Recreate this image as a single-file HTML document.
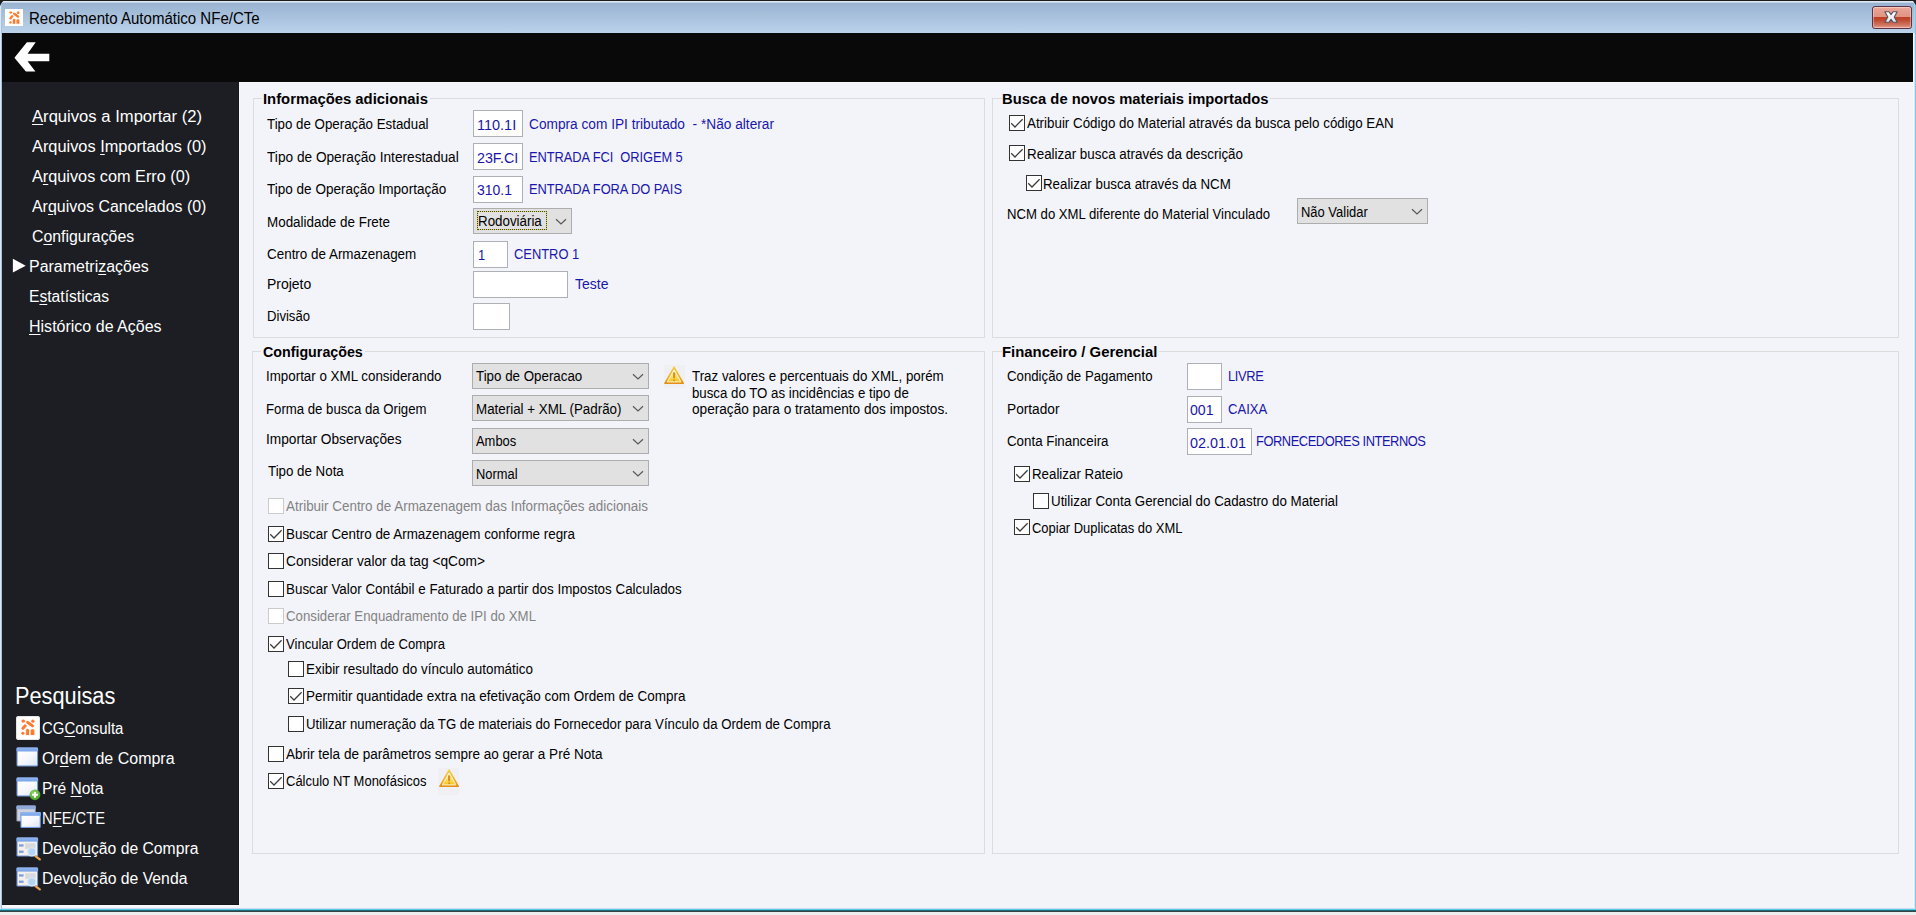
<!DOCTYPE html>
<html lang="pt-BR">
<head>
<meta charset="utf-8">
<title>Recebimento Automático NFe/CTe</title>
<style>
html,body{margin:0;padding:0;}
body{width:1916px;height:915px;overflow:hidden;position:relative;background:#f3f4f9;font-family:"Liberation Sans",sans-serif;}
div,span,svg{position:absolute;box-sizing:border-box;}
.t{white-space:pre;transform-origin:0 0;font-family:"Liberation Sans",sans-serif;}
.t u{text-decoration:underline;text-decoration-thickness:1px;text-underline-offset:2px;}
.inp{background:#fff;border:1px solid #adb0b5;}
.cmb{background:#e1e1e1;border:1px solid #adadad;}
.cmb .chev{right:4px;top:9px;}
.grp{border:1px solid #dcdcdc;}
.gap{background:#f3f4f9;}
.cb{width:16px;height:16px;background:#fff;border:1px solid #333;}
.cb svg{left:-1px;top:-1px;}
.cb.dis{border-color:#cbcbcb;background:#fff;}
</style>
</head>
<body>
<!-- window frame -->
<div style="left:0;top:0;width:1916px;height:33px;background:linear-gradient(#99b3d1 3px,#bad1ea 32px)"></div>
<div style="left:0;top:0;width:1916px;height:1px;background:#1b1b1b"></div>
<div style="left:0;top:1px;width:1916px;height:1px;background:#dfe8f2"></div>
<div style="left:0;top:2px;width:1916px;height:1px;background:#c4d4e7"></div>
<div style="left:0;top:3px;width:1px;height:906px;background:#dbe7f5"></div>
<div style="left:1px;top:3px;width:1px;height:906px;background:#a9c1de"></div>
<div style="left:1913px;top:33px;width:1px;height:876px;background:#f8f9fd"></div>
<div style="left:1914px;top:33px;width:1px;height:876px;background:#dce2f4"></div>
<div style="left:1914px;top:3px;width:1px;height:30px;background:#b4cbe4"></div>
<div style="left:1915px;top:3px;width:1px;height:906px;background:#7ccbe9"></div>
<svg style="left:0;top:0" width="8" height="8" viewBox="0 0 8 8"><path d="M0 0H8V1H3.4L2.3 2L1.5 3L1 4L0.5 5L0 6.2Z" fill="#1c1c1c"/></svg>
<svg style="left:1908px;top:0" width="8" height="8" viewBox="0 0 8 8"><path d="M8 0V5.6L7.2 4L6.5 3L5.8 2L5 1H0V0Z" fill="#1c1c1c"/></svg>
<!-- title icon -->
<div style="left:5px;top:9px;width:18px;height:17px;background:#fff"></div>

<!-- close button -->
<div style="left:1872px;top:6px;width:40px;height:23px;border-radius:3.5px;background:#5a3346"></div>
<div style="left:1873px;top:7px;width:38px;height:21px;border-radius:2.5px;background:linear-gradient(#f4c2b6 0,#e8a293 8%,#e09484 46%,#bf3f24 50%,#c04a30 62%,#d27a66 88%,#e8a99c 100%)"></div>
<div style="left:1873px;top:7px;width:38px;height:21px;border-radius:2.5px;box-shadow:inset 0 0 0 1px rgba(255,220,210,.45)"></div>
<svg style="left:1884px;top:10px" width="15" height="14" viewBox="0 0 15 14">
 <defs><linearGradient id="xg" x1="0" y1="0" x2="0" y2="1"><stop offset="0" stop-color="#ffffff"/><stop offset="1" stop-color="#e2e2e6"/></linearGradient></defs>
 <path d="M0.9 1.7 L5.0 1.7 L7.05 4.6 L9.1 1.7 L13.2 1.7 L10.3 7.0 L13.2 12.2 L9.1 12.2 L7.05 9.4 L5.0 12.2 L0.9 12.2 L3.8 7.0 Z" fill="url(#xg)" stroke="#55505f" stroke-width="1.1" stroke-linejoin="round"/>
</svg>
<!-- black bar -->
<div style="left:2px;top:33px;width:1911px;height:49px;background:#090909"></div>
<svg style="left:0;top:33px" width="80" height="49" viewBox="0 33 80 49">
 <polygon points="14.4,57.8 26.9,42.3 35.7,42.3 27.6,53.7 49.3,53.7 49.3,61.3 27.6,61.3 35.4,71.4 25.9,71.4" fill="#fff"/>
</svg>
<!-- sidebar -->
<div style="left:2px;top:82px;width:237px;height:823px;background:#1c1e23"></div>
<svg style="left:12px;top:258px" width="15" height="16" viewBox="0 0 15 16"><polygon points="0.9,0.8 13.7,7.7 0.9,14.6" fill="#fff"/></svg>
<!-- bottom -->
<div style="left:2px;top:905px;width:238px;height:2px;background:#f9faff"></div>
<div style="left:239px;top:82px;width:1px;height:824px;background:#f8f9fd"></div>
<div style="left:238px;top:82px;width:1px;height:823px;background:#15171b"></div>
<div style="left:2px;top:904px;width:237px;height:1px;background:#15171b"></div>
<div style="left:240px;top:82px;width:1673px;height:1px;background:#f8f9fd"></div>
<div style="left:2px;top:908px;width:1912px;height:1px;background:#d2d9ee"></div>
<div style="left:0;top:909px;width:1916px;height:1px;background:#4fd0e8"></div>
<div style="left:0;top:910px;width:1916px;height:1px;background:#1a6878"></div>
<div style="left:0;top:911px;width:1916px;height:1px;background:#3a4244"></div>
<div style="left:0;top:912px;width:1916px;height:3px;background:#eeeeee"></div>
<div class="inp" style="left:473px;top:110px;width:50px;height:27px"></div>
<div class="inp" style="left:473px;top:143px;width:50px;height:27px"></div>
<div class="inp" style="left:473px;top:175.5px;width:50px;height:27px"></div>
<div class="inp" style="left:473px;top:240.5px;width:35px;height:27px"></div>
<div class="inp" style="left:473px;top:270.5px;width:95px;height:27px"></div>
<div class="inp" style="left:473px;top:303px;width:37px;height:27px"></div>
<div class="inp" style="left:1187px;top:363px;width:35px;height:27px"></div>
<div class="inp" style="left:1187px;top:395.5px;width:35px;height:27px"></div>
<div class="inp" style="left:1187px;top:428px;width:65px;height:27px"></div>
<div class="cmb" style="left:473px;top:208px;width:99px;height:26px"><svg class="chev" width="12" height="8" viewBox="0 0 12 8"><polyline points="1,1.2 6,6 11,1.2" fill="none" stroke="#585858" stroke-width="1.2"/></svg></div>
<div class="cmb" style="left:472px;top:363px;width:177px;height:26px"><svg class="chev" width="12" height="8" viewBox="0 0 12 8"><polyline points="1,1.2 6,6 11,1.2" fill="none" stroke="#585858" stroke-width="1.2"/></svg></div>
<div class="cmb" style="left:472px;top:395px;width:177px;height:26px"><svg class="chev" width="12" height="8" viewBox="0 0 12 8"><polyline points="1,1.2 6,6 11,1.2" fill="none" stroke="#585858" stroke-width="1.2"/></svg></div>
<div class="cmb" style="left:472px;top:428px;width:177px;height:26px"><svg class="chev" width="12" height="8" viewBox="0 0 12 8"><polyline points="1,1.2 6,6 11,1.2" fill="none" stroke="#585858" stroke-width="1.2"/></svg></div>
<div class="cmb" style="left:472px;top:460px;width:177px;height:26px"><svg class="chev" width="12" height="8" viewBox="0 0 12 8"><polyline points="1,1.2 6,6 11,1.2" fill="none" stroke="#585858" stroke-width="1.2"/></svg></div>
<div class="cmb" style="left:1297px;top:198px;width:131px;height:26px"><svg class="chev" width="12" height="8" viewBox="0 0 12 8"><polyline points="1,1.2 6,6 11,1.2" fill="none" stroke="#585858" stroke-width="1.2"/></svg></div>
<div class="grp" style="left:253px;top:98px;width:732px;height:240px"></div>
<div class="gap" style="left:262px;top:97px;width:167.5px;height:3px"></div>
<div class="grp" style="left:992px;top:98px;width:907px;height:240px"></div>
<div class="gap" style="left:1001.5px;top:97px;width:268.5px;height:3px"></div>
<div class="grp" style="left:252px;top:350.5px;width:733px;height:503.5px"></div>
<div class="gap" style="left:261px;top:349.5px;width:103.75px;height:3px"></div>
<div class="grp" style="left:992px;top:350.5px;width:907px;height:503.5px"></div>
<div class="gap" style="left:1001.5px;top:349.5px;width:157.5px;height:3px"></div>
<!-- icons -->
<svg width="0" height="0" style="left:0;top:0">
 <defs>
  <linearGradient id="wb" x1="0" y1="0" x2="1" y2="1"><stop offset="0" stop-color="#ffffff"/><stop offset="0.5" stop-color="#f6f8fd"/><stop offset="1" stop-color="#dde5f6"/></linearGradient>
  <linearGradient id="wt" x1="0" y1="0" x2="0" y2="1"><stop offset="0" stop-color="#93b6ef"/><stop offset="1" stop-color="#77a3e8"/></linearGradient>
  <radialGradient id="gr" cx="0.4" cy="0.35" r="0.7"><stop offset="0" stop-color="#9bd86a"/><stop offset="1" stop-color="#3f9a22"/></radialGradient>
  <linearGradient id="wy" x1="0" y1="0" x2="0" y2="1"><stop offset="0" stop-color="#fff6c4"/><stop offset="0.55" stop-color="#fbe066"/><stop offset="1" stop-color="#f2c318"/></linearGradient>
  <linearGradient id="wo" x1="0" y1="0" x2="0" y2="1"><stop offset="0" stop-color="#f7cc4a"/><stop offset="0.6" stop-color="#f0b02c"/><stop offset="1" stop-color="#e58f17"/></linearGradient>
  <g id="logo" fill="#ff6f1e" stroke="#ff6f1e" opacity="0.93" stroke-linecap="round">
   <ellipse cx="1.6" cy="1.35" rx="1.3" ry="1.05" stroke-width="0.3"/>
   <ellipse cx="9.1" cy="1.5" rx="1.1" ry="1.2" stroke-width="0.3"/>
   <path d="M5.0 2.4 L8.9 5.3" stroke-width="2.3" fill="none"/>
   <path d="M1.35 7.2 L3.1 5.1" stroke-width="2.3" fill="none"/>
   <ellipse cx="1.3" cy="11.25" rx="1.05" ry="1.1" stroke-width="0.3"/>
   <path d="M3.8 8.6 C4.2 7.4 5.7 7.4 6.1 8.3 L6.1 12.5 L3.9 12.5 Z" stroke-width="0.2"/>
   <path d="M7.5 8.9 C7.9 7.6 9.9 7.6 10.2 8.9 L10.2 12.5 L7.6 12.5 Z" stroke-width="0.2"/>
  </g>
  <g id="win">
   <rect x="0.5" y="0.5" width="21.6" height="19" rx="1.4" fill="#7399dc"/>
   <rect x="0.5" y="0.5" width="21.6" height="4.4" rx="1.4" fill="url(#wt)"/>
   <rect x="1.6" y="4.5" width="19.4" height="13.9" fill="url(#wb)"/>
  </g>
 </defs>
</svg>
<!-- CGConsulta -->
<div style="left:16px;top:716px;width:24px;height:24px;background:#fff;border-radius:3px;box-shadow:inset 0 0 0 1px #e4e4e4"></div>
<svg style="left:16px;top:716px" width="24" height="24" viewBox="0 0 24 24"><use href="#logo" transform="translate(5.2,3.4) scale(1.28,1.24)"/></svg>
<!-- Ordem de Compra -->
<svg style="left:15.5px;top:747px" width="24" height="21" viewBox="0 0 24 21"><use href="#win"/></svg>
<!-- Pre Nota -->
<svg style="left:15.5px;top:777px" width="26" height="25" viewBox="0 0 26 25"><use href="#win"/>
 <circle cx="19" cy="17.8" r="5.4" fill="url(#gr)"/><path d="M19 14.9v5.8M16.1 17.8h5.8" stroke="#fff" stroke-width="1.9"/></svg>
<!-- NFE/CTE -->
<svg style="left:15.5px;top:805.4px" width="26" height="24" viewBox="0 0 26 24">
 <rect x="0.4" y="0.6" width="19.4" height="16" rx="1.3" fill="#8797b8"/>
 <rect x="0.4" y="0.6" width="19.4" height="3.8" rx="1.3" fill="#8eaad9"/>
 <rect x="1.4" y="4.2" width="17.4" height="11.4" fill="#cfd2da"/>
 <rect x="4.4" y="7" width="20.4" height="16" rx="1.3" fill="#7399dc"/>
 <rect x="4.4" y="7" width="20.4" height="4.2" rx="1.3" fill="url(#wt)"/>
 <rect x="5.5" y="10.8" width="18.2" height="11.1" fill="url(#wb)"/>
</svg>
<!-- Devolucao de Compra / Venda -->
<svg style="left:15.5px;top:837px" width="27" height="25" viewBox="0 0 27 25" id="dev1">
 <rect x="0.5" y="0.4" width="21.6" height="19.2" rx="1.4" fill="#7399dc"/>
 <rect x="0.5" y="0.4" width="21.6" height="4.4" rx="1.4" fill="url(#wt)"/>
 <rect x="1.6" y="4.6" width="19.4" height="13.9" fill="#f4f1ec"/>
 <rect x="3" y="7.3" width="4.6" height="2.3" fill="#7d9fe2"/>
 <rect x="3" y="13.6" width="4.6" height="2.3" fill="#7d9fe2"/>
 <rect x="9.2" y="6.3" width="10.4" height="5.6" fill="#d9d9dc"/>
 <path d="M19.7 19.4 L23.8 22.4" stroke="#e9a352" stroke-width="2.3" stroke-linecap="round"/>
 <circle cx="15.8" cy="14.85" r="4.1" fill="#b4d4f6" stroke="#dbeafb" stroke-width="1.1"/>
</svg>
<svg style="left:15.5px;top:867px" width="27" height="25" viewBox="0 0 27 25"><use href="#dev1"/></svg>
<!-- warning icons -->
<div style="left:664px;top:365px;width:21px;height:23px;background:#f0f0f2"></div>
<svg style="left:663px;top:365px" width="23" height="21" viewBox="0 0 23 21" id="warn">
 <path d="M11.1 1.9 L20.4 18.4 L1.8 18.4 Z" fill="url(#wo)" stroke="url(#wo)" stroke-width="1.2" stroke-linejoin="round"/>
 <path d="M11.1 4.9 L17.9 16.9 L4.3 16.9 Z" fill="url(#wy)" stroke="#fff8dc" stroke-width="1" stroke-linejoin="round"/>
 <path d="M11.1 8.3 v4" stroke="#d79222" stroke-width="2.2" stroke-linecap="round"/>
 <circle cx="11.1" cy="15.2" r="1" fill="#d79222"/>
</svg>
<div style="left:438px;top:768px;width:21px;height:27px;background:#f0f0f2"></div>
<svg style="left:437.5px;top:768.3px" width="23" height="21" viewBox="0 0 23 21"><use href="#warn"/></svg>
<!-- focus rect -->
<div style="left:477px;top:211px;width:70px;height:19px;border:1px solid #d8d848"></div>
<div style="left:477px;top:211px;width:70px;height:19px;border:1px dotted #4a4a18"></div>
<!-- title logo -->
<svg style="left:5px;top:9px" width="18" height="17" viewBox="0 0 18 17"><use href="#logo" transform="translate(4.05,2.2)"/></svg>

<div class="cb dis" style="left:268px;top:498px"></div>
<div class="cb" style="left:268px;top:525.5px"><svg width="16" height="16" viewBox="0 0 16 16"><polyline points="2.2,8.3 6,12 13.6,4.2" fill="none" stroke="#3c3c3c" stroke-width="1.25"/></svg></div>
<div class="cb" style="left:268px;top:553px"></div>
<div class="cb" style="left:268px;top:580.5px"></div>
<div class="cb dis" style="left:268px;top:608px"></div>
<div class="cb" style="left:268px;top:635.5px"><svg width="16" height="16" viewBox="0 0 16 16"><polyline points="2.2,8.3 6,12 13.6,4.2" fill="none" stroke="#3c3c3c" stroke-width="1.25"/></svg></div>
<div class="cb" style="left:288px;top:660.5px"></div>
<div class="cb" style="left:288px;top:688px"><svg width="16" height="16" viewBox="0 0 16 16"><polyline points="2.2,8.3 6,12 13.6,4.2" fill="none" stroke="#3c3c3c" stroke-width="1.25"/></svg></div>
<div class="cb" style="left:288px;top:715.5px"></div>
<div class="cb" style="left:268px;top:745.5px"></div>
<div class="cb" style="left:268px;top:773px"><svg width="16" height="16" viewBox="0 0 16 16"><polyline points="2.2,8.3 6,12 13.6,4.2" fill="none" stroke="#3c3c3c" stroke-width="1.25"/></svg></div>
<div class="cb" style="left:1009px;top:115px"><svg width="16" height="16" viewBox="0 0 16 16"><polyline points="2.2,8.3 6,12 13.6,4.2" fill="none" stroke="#3c3c3c" stroke-width="1.25"/></svg></div>
<div class="cb" style="left:1009px;top:145.25px"><svg width="16" height="16" viewBox="0 0 16 16"><polyline points="2.2,8.3 6,12 13.6,4.2" fill="none" stroke="#3c3c3c" stroke-width="1.25"/></svg></div>
<div class="cb" style="left:1025.5px;top:175.25px"><svg width="16" height="16" viewBox="0 0 16 16"><polyline points="2.2,8.3 6,12 13.6,4.2" fill="none" stroke="#3c3c3c" stroke-width="1.25"/></svg></div>
<div class="cb" style="left:1014.25px;top:465.5px"><svg width="16" height="16" viewBox="0 0 16 16"><polyline points="2.2,8.3 6,12 13.6,4.2" fill="none" stroke="#3c3c3c" stroke-width="1.25"/></svg></div>
<div class="cb" style="left:1033px;top:493px"></div>
<div class="cb" style="left:1014.25px;top:519.25px"><svg width="16" height="16" viewBox="0 0 16 16"><polyline points="2.2,8.3 6,12 13.6,4.2" fill="none" stroke="#3c3c3c" stroke-width="1.25"/></svg></div>
<span class="t" style="left:29.30px;top:7.00px;font-size:16px;line-height:24px;color:#000;transform:scaleX(0.9399);">Recebimento Automático NFe/CTe</span>
<span class="t" style="left:31.50px;top:104.70px;font-size:15.6px;line-height:23px;color:#ffffff;transform:scaleX(1.0660);"><u>A</u>rquivos a Importar (2)</span>
<span class="t" style="left:31.50px;top:134.70px;font-size:15.6px;line-height:23px;color:#ffffff;transform:scaleX(1.0486);">Arquivos <u>I</u>mportados (0)</span>
<span class="t" style="left:31.50px;top:164.70px;font-size:15.6px;line-height:23px;color:#ffffff;transform:scaleX(1.0431);">A<u>r</u>quivos com Erro (0)</span>
<span class="t" style="left:31.50px;top:194.70px;font-size:15.6px;line-height:23px;color:#ffffff;transform:scaleX(1.0214);">Ar<u>q</u>uivos Cancelados (0)</span>
<span class="t" style="left:31.80px;top:224.70px;font-size:15.6px;line-height:23px;color:#ffffff;transform:scaleX(1.0153);">C<u>o</u>nfigurações</span>
<span class="t" style="left:28.90px;top:254.70px;font-size:15.6px;line-height:23px;color:#ffffff;transform:scaleX(1.0239);">Parametri<u>z</u>ações</span>
<span class="t" style="left:28.90px;top:284.70px;font-size:15.6px;line-height:23px;color:#ffffff;transform:scaleX(1.0033);">E<u>s</u>tatísticas</span>
<span class="t" style="left:28.90px;top:314.70px;font-size:15.6px;line-height:23px;color:#ffffff;transform:scaleX(1.0267);"><u>H</u>istórico de Ações</span>
<span class="t" style="left:14.50px;top:678.80px;font-size:23px;line-height:34px;color:#ffffff;transform:scaleX(0.9451);">Pesquisas</span>
<span class="t" style="left:42.10px;top:717.00px;font-size:15.6px;line-height:23px;color:#ffffff;transform:scaleX(0.9584);">CG<u>C</u>onsulta</span>
<span class="t" style="left:42.10px;top:747.00px;font-size:15.6px;line-height:23px;color:#ffffff;transform:scaleX(1.0268);">Or<u>d</u>em de Compra</span>
<span class="t" style="left:42.10px;top:777.00px;font-size:15.6px;line-height:23px;color:#ffffff;transform:scaleX(0.9976);">Pré <u>N</u>ota</span>
<span class="t" style="left:42.10px;top:807.00px;font-size:15.6px;line-height:23px;color:#ffffff;transform:scaleX(0.9443);">N<u>F</u>E/CTE</span>
<span class="t" style="left:42.10px;top:837.00px;font-size:15.6px;line-height:23px;color:#ffffff;transform:scaleX(1.0080);">Devol<u>u</u>ção de Compra</span>
<span class="t" style="left:42.10px;top:867.00px;font-size:15.6px;line-height:23px;color:#ffffff;transform:scaleX(1.0102);">Devo<u>l</u>ução de Venda</span>
<span class="t" style="left:262.80px;top:89.00px;font-size:14px;line-height:21px;color:#000;transform:scaleX(1.0597);font-weight:700;">Informações adicionais</span>
<span class="t" style="left:1002.10px;top:89.00px;font-size:14px;line-height:21px;color:#000;transform:scaleX(1.0536);font-weight:700;">Busca de novos materiais importados</span>
<span class="t" style="left:262.50px;top:341.50px;font-size:14px;line-height:21px;color:#000;transform:scaleX(1.0182);font-weight:700;">Configurações</span>
<span class="t" style="left:1002.10px;top:341.50px;font-size:14px;line-height:21px;color:#000;transform:scaleX(1.0623);font-weight:700;">Financeiro / Gerencial</span>
<span class="t" style="left:267.00px;top:114.00px;font-size:14px;line-height:21px;color:#000;transform:scaleX(0.9504);">Tipo de Operação Estadual</span>
<span class="t" style="left:267.00px;top:146.50px;font-size:14px;line-height:21px;color:#000;transform:scaleX(0.9764);">Tipo de Operação Interestadual</span>
<span class="t" style="left:267.00px;top:179.00px;font-size:14px;line-height:21px;color:#000;transform:scaleX(0.9664);">Tipo de Operação Importação</span>
<span class="t" style="left:267.00px;top:211.50px;font-size:14px;line-height:21px;color:#000;transform:scaleX(0.9578);">Modalidade de Frete</span>
<span class="t" style="left:267.00px;top:244.00px;font-size:14px;line-height:21px;color:#000;transform:scaleX(0.9589);">Centro de Armazenagem</span>
<span class="t" style="left:267.00px;top:274.00px;font-size:14px;line-height:21px;color:#000;transform:scaleX(0.9975);">Projeto</span>
<span class="t" style="left:267.00px;top:306.25px;font-size:14px;line-height:21px;color:#000;transform:scaleX(0.9367);">Divisão</span>
<span class="t" style="left:477.30px;top:115.00px;font-size:14px;line-height:21px;color:#1a16ac;transform:scaleX(1.0346);">110.1I</span>
<span class="t" style="left:476.75px;top:147.50px;font-size:14px;line-height:21px;color:#1a16ac;transform:scaleX(1.0193);">23F.CI</span>
<span class="t" style="left:476.75px;top:180.00px;font-size:14px;line-height:21px;color:#1a16ac;transform:scaleX(0.9987);">310.1</span>
<span class="t" style="left:477.50px;top:211.30px;font-size:14px;line-height:21px;color:#000;transform:scaleX(0.9531);">Rodoviária</span>
<span class="t" style="left:477.75px;top:245.25px;font-size:14px;line-height:21px;color:#1a16ac;transform:scaleX(0.9200);letter-spacing:-1.547px;">1</span>
<span class="t" style="left:528.80px;top:114.00px;font-size:14px;line-height:21px;color:#1a16ac;transform:scaleX(0.9779);">Compra com IPI tributado  - *Não alterar</span>
<span class="t" style="left:528.80px;top:146.50px;font-size:14px;line-height:21px;color:#1a16ac;transform:scaleX(0.9200);letter-spacing:-0.083px;">ENTRADA FCI  ORIGEM 5</span>
<span class="t" style="left:528.80px;top:179.00px;font-size:14px;line-height:21px;color:#1a16ac;transform:scaleX(0.9200);letter-spacing:-0.079px;">ENTRADA FORA DO PAIS</span>
<span class="t" style="left:513.80px;top:244.00px;font-size:14px;line-height:21px;color:#1a16ac;transform:scaleX(0.9209);">CENTRO 1</span>
<span class="t" style="left:575.00px;top:274.00px;font-size:14px;line-height:21px;color:#1a16ac;transform:scaleX(1.0009);">Teste</span>
<span class="t" style="left:265.75px;top:366.25px;font-size:14px;line-height:21px;color:#000;transform:scaleX(0.9542);">Importar o XML considerando</span>
<span class="t" style="left:265.75px;top:398.75px;font-size:14px;line-height:21px;color:#000;transform:scaleX(0.9419);">Forma de busca da Origem</span>
<span class="t" style="left:265.75px;top:428.75px;font-size:14px;line-height:21px;color:#000;transform:scaleX(0.9783);">Importar Observações</span>
<span class="t" style="left:267.50px;top:461.00px;font-size:14px;line-height:21px;color:#000;transform:scaleX(0.9511);">Tipo de Nota</span>
<span class="t" style="left:476.00px;top:366.00px;font-size:14px;line-height:21px;color:#000;transform:scaleX(0.9524);">Tipo de Operacao</span>
<span class="t" style="left:475.75px;top:398.50px;font-size:14px;line-height:21px;color:#000;transform:scaleX(0.9549);">Material + XML (Padrão)</span>
<span class="t" style="left:476.00px;top:431.25px;font-size:14px;line-height:21px;color:#000;transform:scaleX(0.9236);">Ambos</span>
<span class="t" style="left:476.00px;top:463.75px;font-size:14px;line-height:21px;color:#000;transform:scaleX(0.9200);">Normal</span>
<span class="t" style="left:692.00px;top:366.25px;font-size:14px;line-height:21px;color:#000;transform:scaleX(0.9534);">Traz valores e percentuais do XML, porém</span>
<span class="t" style="left:692.00px;top:382.50px;font-size:14px;line-height:21px;color:#000;transform:scaleX(0.9462);">busca do TO as incidências e tipo de</span>
<span class="t" style="left:692.00px;top:398.75px;font-size:14px;line-height:21px;color:#000;transform:scaleX(0.9732);">operação para o tratamento dos impostos.</span>
<span class="t" style="left:286.00px;top:496.25px;font-size:14px;line-height:21px;color:#838383;transform:scaleX(0.9591);">Atribuir Centro de Armazenagem das Informações adicionais</span>
<span class="t" style="left:286.00px;top:523.75px;font-size:14px;line-height:21px;color:#000;transform:scaleX(0.9572);">Buscar Centro de Armazenagem conforme regra</span>
<span class="t" style="left:286.00px;top:551.25px;font-size:14px;line-height:21px;color:#000;transform:scaleX(0.9798);">Considerar valor da tag &lt;qCom&gt;</span>
<span class="t" style="left:286.00px;top:578.75px;font-size:14px;line-height:21px;color:#000;transform:scaleX(0.9565);">Buscar Valor Contábil e Faturado a partir dos Impostos Calculados</span>
<span class="t" style="left:286.00px;top:606.25px;font-size:14px;line-height:21px;color:#838383;transform:scaleX(0.9448);">Considerar Enquadramento de IPI do XML</span>
<span class="t" style="left:286.00px;top:633.75px;font-size:14px;line-height:21px;color:#000;transform:scaleX(0.9344);">Vincular Ordem de Compra</span>
<span class="t" style="left:305.50px;top:658.75px;font-size:14px;line-height:21px;color:#000;transform:scaleX(0.9595);">Exibir resultado do vínculo automático</span>
<span class="t" style="left:305.50px;top:686.25px;font-size:14px;line-height:21px;color:#000;transform:scaleX(0.9638);">Permitir quantidade extra na efetivação com Ordem de Compra</span>
<span class="t" style="left:305.50px;top:713.75px;font-size:14px;line-height:21px;color:#000;transform:scaleX(0.9431);">Utilizar numeração da TG de materiais do Fornecedor para Vínculo da Ordem de Compra</span>
<span class="t" style="left:286.00px;top:743.75px;font-size:14px;line-height:21px;color:#000;transform:scaleX(0.9661);">Abrir tela de parâmetros sempre ao gerar a Pré Nota</span>
<span class="t" style="left:286.00px;top:771.25px;font-size:14px;line-height:21px;color:#000;transform:scaleX(0.9275);">Cálculo NT Monofásicos</span>
<span class="t" style="left:1027.25px;top:113.25px;font-size:14px;line-height:21px;color:#000;transform:scaleX(0.9540);">Atribuir Código do Material através da busca pelo código EAN</span>
<span class="t" style="left:1026.50px;top:143.50px;font-size:14px;line-height:21px;color:#000;transform:scaleX(0.9571);">Realizar busca através da descrição</span>
<span class="t" style="left:1042.75px;top:173.50px;font-size:14px;line-height:21px;color:#000;transform:scaleX(0.9500);">Realizar busca através da NCM</span>
<span class="t" style="left:1007.00px;top:204.00px;font-size:14px;line-height:21px;color:#000;transform:scaleX(0.9388);">NCM do XML diferente do Material Vinculado</span>
<span class="t" style="left:1300.75px;top:201.50px;font-size:14px;line-height:21px;color:#000;transform:scaleX(0.9255);">Não Validar</span>
<span class="t" style="left:1007.00px;top:366.25px;font-size:14px;line-height:21px;color:#000;transform:scaleX(0.9441);">Condição de Pagamento</span>
<span class="t" style="left:1007.00px;top:398.75px;font-size:14px;line-height:21px;color:#000;transform:scaleX(0.9776);">Portador</span>
<span class="t" style="left:1007.00px;top:431.25px;font-size:14px;line-height:21px;color:#000;transform:scaleX(0.9519);">Conta Financeira</span>
<span class="t" style="left:1228.25px;top:366.25px;font-size:14px;line-height:21px;color:#1a16ac;transform:scaleX(0.9200);letter-spacing:-0.376px;">LIVRE</span>
<span class="t" style="left:1228.25px;top:398.75px;font-size:14px;line-height:21px;color:#1a16ac;transform:scaleX(0.9342);">CAIXA</span>
<span class="t" style="left:1255.80px;top:431.25px;font-size:14px;line-height:21px;color:#1a16ac;transform:scaleX(0.9200);letter-spacing:-0.487px;">FORNECEDORES INTERNOS</span>
<span class="t" style="left:1189.50px;top:400.00px;font-size:14px;line-height:21px;color:#1a16ac;transform:scaleX(1.0060);">001</span>
<span class="t" style="left:1189.50px;top:432.50px;font-size:14px;line-height:21px;color:#1a16ac;transform:scaleX(1.0275);">02.01.01</span>
<span class="t" style="left:1031.50px;top:463.75px;font-size:14px;line-height:21px;color:#000;transform:scaleX(0.9507);">Realizar Rateio</span>
<span class="t" style="left:1050.50px;top:491.25px;font-size:14px;line-height:21px;color:#000;transform:scaleX(0.9530);">Utilizar Conta Gerencial do Cadastro do Material</span>
<span class="t" style="left:1031.50px;top:517.50px;font-size:14px;line-height:21px;color:#000;transform:scaleX(0.9254);">Copiar Duplicatas do XML</span>
</body>
</html>
